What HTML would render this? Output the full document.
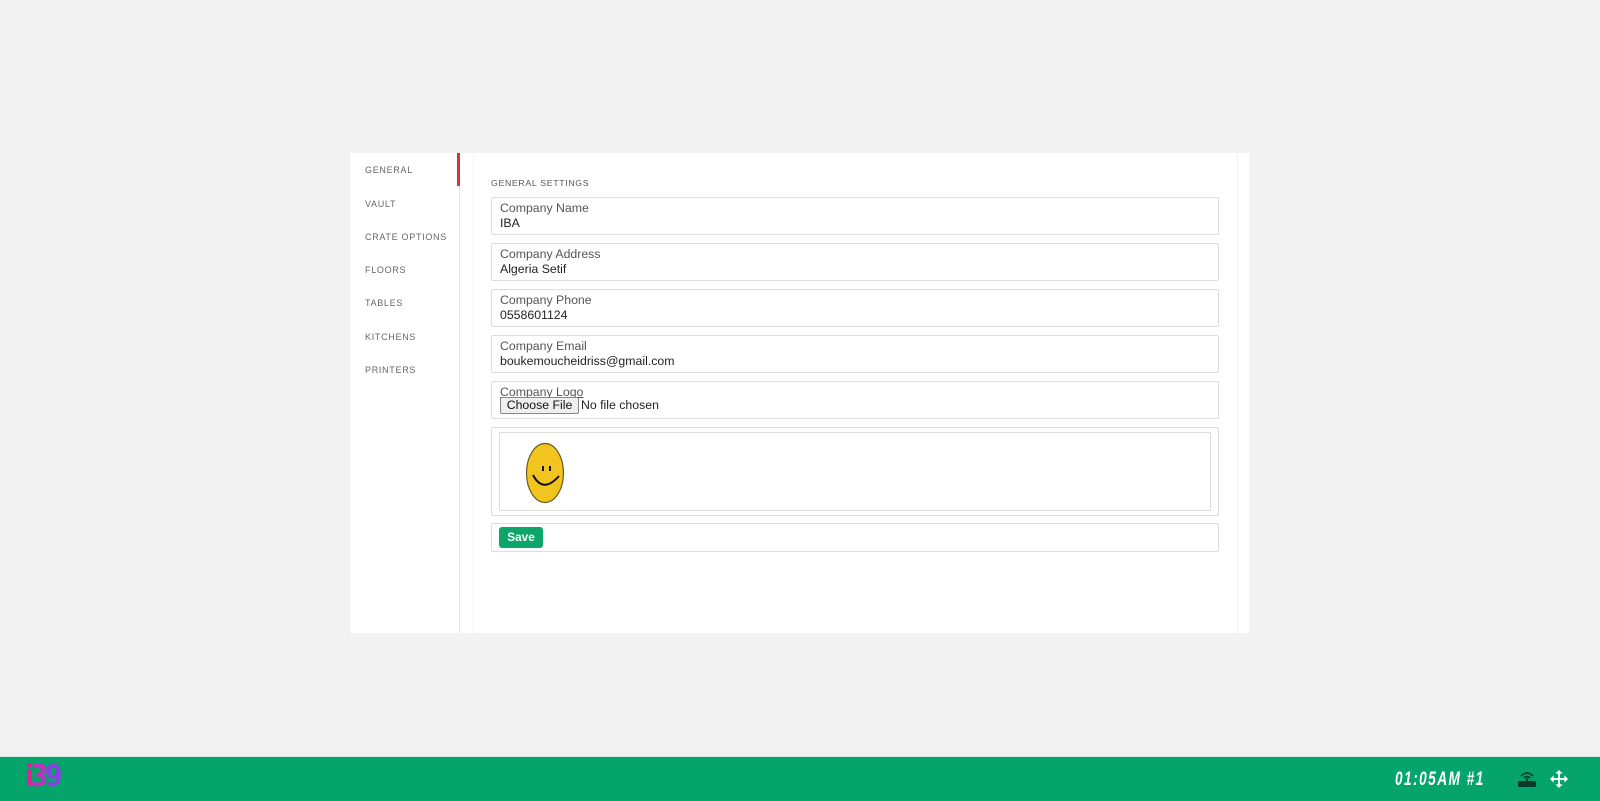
<!DOCTYPE html>
<html><head><style>
body{margin:0;width:1600px;height:800px;background:#f2f2f2;font-family:"Liberation Sans",sans-serif;position:relative;overflow:hidden}
.wrap{position:absolute;left:350px;top:153px;width:899px;height:480px;background:#fff}
.side{position:absolute;left:0;top:0;width:109px;height:480px;border-right:1px solid #e6e6e6}
.side div{position:absolute;left:15px;font-size:9px;letter-spacing:0.7px;color:#666;line-height:12px}
.act{position:absolute;left:107px;top:0;width:3px;height:33px;background:#d9323a}
.card{position:absolute;left:123px;top:0;width:763px;height:480px;border-left:1px solid #f3f3f3;border-right:1px solid #f0f0f0}
.title{position:absolute;left:141px;top:25px;font-size:8.7px;letter-spacing:0.7px;color:#555}
.box{position:absolute;left:141px;width:728px;border:1px solid #ddd;border-radius:2px;background:#fff;box-sizing:border-box}
.lab{position:absolute;left:8px;top:3px;font-size:12.3px;color:#555}
.val{position:absolute;left:8px;top:18px;font-size:12.3px;color:#222}
.btn{position:absolute;left:8px;top:15px;width:77px;height:15px;border:1px solid #888;background:#efefef;border-radius:2px;font-size:12.3px;text-align:center;line-height:15px;color:#111}
.bar{position:absolute;left:0;top:756px;width:1600px;height:44px;background:#04a46a;border-top:1px solid #d0e8dc}
</style></head><body>
<div class="wrap">
 <div class="card"></div>
 <div class="side">
  <div style="top:11px">GENERAL</div>
  <div style="top:45px">VAULT</div>
  <div style="top:78px">CRATE OPTIONS</div>
  <div style="top:111px">FLOORS</div>
  <div style="top:144px">TABLES</div>
  <div style="top:178px">KITCHENS</div>
  <div style="top:211px">PRINTERS</div>
 </div>
 <div class="act"></div>
 <div class="title">GENERAL SETTINGS</div>
 <div class="box" style="top:44px;height:38px"><div class="lab">Company Name</div><div class="val">IBA</div></div>
 <div class="box" style="top:90px;height:38px"><div class="lab">Company Address</div><div class="val">Algeria Setif</div></div>
 <div class="box" style="top:136px;height:38px"><div class="lab">Company Phone</div><div class="val">0558601124</div></div>
 <div class="box" style="top:182px;height:38px"><div class="lab">Company Email</div><div class="val">boukemoucheidriss@gmail.com</div></div>
 <div class="box" style="top:228px;height:38px"><div class="lab" style="text-decoration:underline">Company Logo</div><div class="btn">Choose File</div><div style="position:absolute;left:89px;top:16px;font-size:12.3px;color:#222">No file chosen</div></div>
 <div class="box" style="top:274px;height:89px">
  <div style="position:absolute;left:7px;top:4px;width:712px;height:79px;border:1px solid #ddd;box-sizing:border-box">
   <svg style="position:absolute;left:25px;top:9px" width="40" height="62" viewBox="0 0 40 62"><ellipse cx="20" cy="31" rx="18.5" ry="29.5" fill="#f2c41f" stroke="#6b5a20" stroke-width="1.2"/><rect x="17" y="24" width="2" height="5" fill="#111"/><rect x="24" y="24" width="2" height="5" fill="#111"/><path d="M8 33 Q18 52 34 34" fill="none" stroke="#111" stroke-width="2"/></svg>
  </div>
 </div>
 <div class="box" style="top:370px;height:29px"><div style="position:absolute;left:7px;top:3px;width:44px;height:21px;background:#0ea56b;border-radius:3px;color:#fff;font-weight:bold;font-size:11.8px;text-align:center;line-height:21px">Save</div></div>
</div>
<div class="bar">
 <div style="position:absolute;left:25px;top:4px;font-size:30px;font-weight:bold;letter-spacing:-4px;color:#e0209a;font-family:'DejaVu Sans',sans-serif;line-height:32px;transform:scaleX(0.85);transform-origin:left">i<span style="color:#c030c0">3</span><span style="color:#8a40e0">9</span></div>
 <div style="position:absolute;left:1395px;top:13px;font-size:19px;font-style:italic;font-weight:bold;color:#fff;line-height:20px;letter-spacing:2px;transform:scaleX(0.72);transform-origin:left;white-space:nowrap">01:05AM #1</div>
 <svg style="position:absolute;left:1517px;top:13px" width="20" height="17" viewBox="0 0 20 17"><path d="M4 6 Q10 0 16 6 M7 8 Q10 5 13 8" fill="none" stroke="#0c3a2a" stroke-width="1.6"/><rect x="9" y="8" width="2" height="4" fill="#0c3a2a"/><rect x="1" y="11" width="18" height="6" rx="1" fill="#0c3a2a"/></svg>
 <svg style="position:absolute;left:1550px;top:13px" width="18" height="18" viewBox="0 0 20 20" fill="#fff"><path d="M10 0 L14 4 H11 V9 H16 V6 L20 10 L16 14 V11 H11 V16 H14 L10 20 L6 16 H9 V11 H4 V14 L0 10 L4 6 V9 H9 V4 H6 Z"/></svg>
</div>
</body></html>
